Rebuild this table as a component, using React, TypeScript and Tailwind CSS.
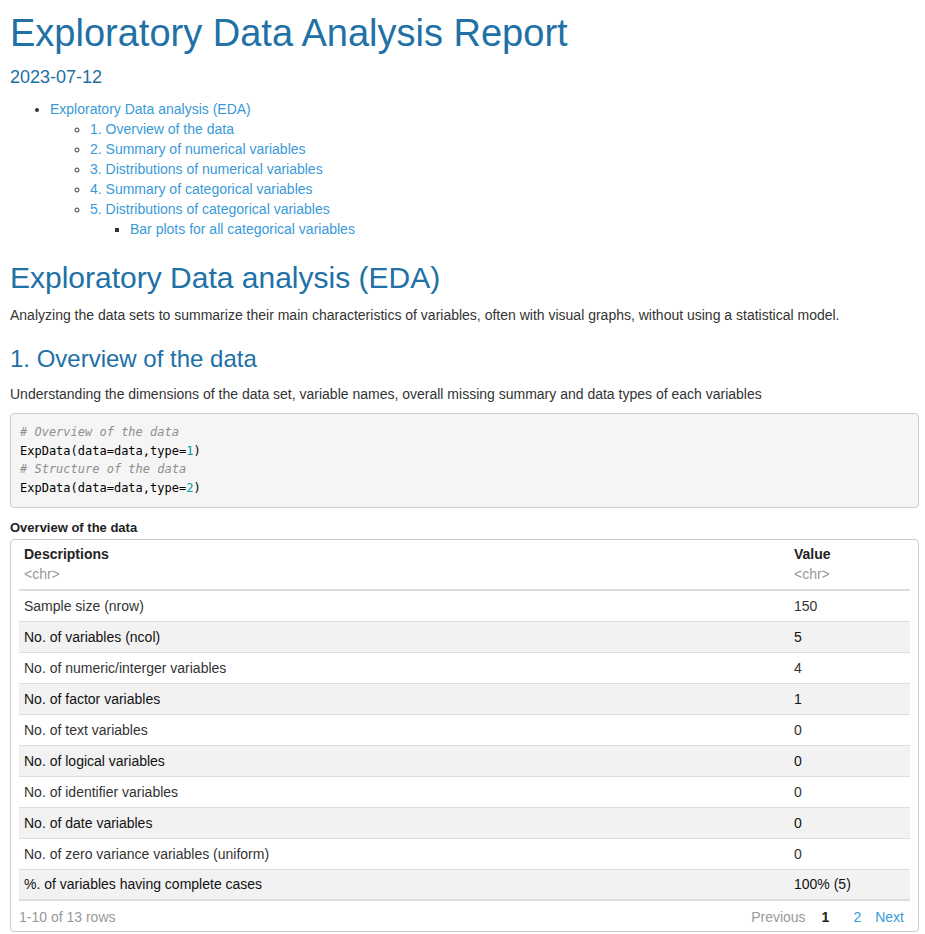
import React from "react";

const rows: [string, string][] = [
  ["Sample size (nrow)", "150"],
  ["No. of variables (ncol)", "5"],
  ["No. of numeric/interger variables", "4"],
  ["No. of factor variables", "1"],
  ["No. of text variables", "0"],
  ["No. of logical variables", "0"],
  ["No. of identifier variables", "0"],
  ["No. of date variables", "0"],
  ["No. of zero variance variables (uniform)", "0"],
  ["%. of variables having complete cases", "100% (5)"],
];

export default function App() {
  return (
    <div
      className="bg-white text-[#333] pl-[10px] pr-[6px] text-[14px] leading-[20px]"
      style={{ fontFamily: '"Liberation Sans", Arial, sans-serif' }}
    >
      <h1 className="text-[#2170a6] text-[38px] leading-[42px] pt-[12px] m-0">
        Exploratory Data Analysis Report
      </h1>
      <h4 className="text-[#2170a6] text-[18px] leading-[20px] mt-[13px]">2023-07-12</h4>
      <div className="mt-[12px] text-[14px] leading-[20px] text-[#3a9ad9]">
        <ul className="list-disc pl-[40px] marker:text-[#333]">
          <li>
            Exploratory Data analysis (EDA)
            <ul className="list-[circle] pl-[40px]">
              <li>1. Overview of the data</li>
              <li>2. Summary of numerical variables</li>
              <li>3. Distributions of numerical variables</li>
              <li>4. Summary of categorical variables</li>
              <li>
                5. Distributions of categorical variables
                <ul className="list-[square] pl-[40px]">
                  <li>Bar plots for all categorical variables</li>
                </ul>
              </li>
            </ul>
          </li>
        </ul>
      </div>
      <h1 className="text-[#2170a6] text-[30px] leading-[34px] mt-[22px]">
        Exploratory Data analysis (EDA)
      </h1>
      <p className="mt-[10px]">
        Analyzing the data sets to summarize their main characteristics of variables, often with visual graphs, without using a statistical model.
      </p>
      <h2 className="text-[#2170a6] text-[24px] leading-[28px] mt-[20px]">1. Overview of the data</h2>
      <p className="mt-[11px]">
        Understanding the dimensions of the data set, variable names, overall missing summary and data types of each variables
      </p>
      <pre
        className="mt-[9px] bg-[#f5f5f5] border border-[#ccc] rounded-[4px] px-[9px] py-[9px] text-[12px] leading-[18.7px] text-black"
        style={{ fontFamily: '"DejaVu Sans Mono", monospace' }}
      >
        <span className="italic text-[#8f8f8f]"># Overview of the data</span>
        {"\n"}ExpData(data=data,type=<span className="text-[#099]">1</span>)
        {"\n"}<span className="italic text-[#8f8f8f]"># Structure of the data</span>
        {"\n"}ExpData(data=data,type=<span className="text-[#099]">2</span>)
      </pre>
      <div className="mt-[12px] font-bold text-[13px] leading-[16px] text-[#222]">Overview of the data</div>
      <div className="mt-[3px] border border-[#ccc] rounded-[4px] px-[8px]">
        <div className="flex pt-[4px] pb-[5px] border-b-2 border-[#ddd]">
          <div className="flex-1 pl-[5px]">
            <div className="font-bold text-[#222]">Descriptions</div>
            <div className="text-[#999]">&lt;chr&gt;</div>
          </div>
          <div className="w-[116px]">
            <div className="font-bold text-[#222]">Value</div>
            <div className="text-[#999]">&lt;chr&gt;</div>
          </div>
        </div>
        {rows.map(([a, b], i) => (
          <div
            key={i}
            className={
              "flex h-[31px] items-center " +
              (i % 2 === 1 ? "bg-[#f2f2f2] " : "bg-white ") +
              (i === rows.length - 1 ? "border-b-2 border-[#ddd]" : "border-b border-[#ddd]")
            }
          >
            <div className={"flex-1 pl-[5px] " + (i % 2 === 1 ? "text-[#111]" : "text-[#333]")}>{a}</div>
            <div className={"w-[116px] " + (i % 2 === 1 ? "text-[#111]" : "text-[#333]")}>{b}</div>
          </div>
        ))}
        <div className="flex h-[30px] pt-[2px] items-center text-[14px]">
          <div className="flex-1 text-[#999]">1-10 of 13 rows</div>
          <div className="flex items-center pr-[6px]">
            <span className="text-[#999]">Previous</span>
            <span className="font-bold text-[#222] ml-[16px]">1</span>
            <span className="text-[#3a9ad9] ml-[24px]">2</span>
            <span className="text-[#3a9ad9] ml-[14px]">Next</span>
          </div>
        </div>
      </div>
    </div>
  );
}
